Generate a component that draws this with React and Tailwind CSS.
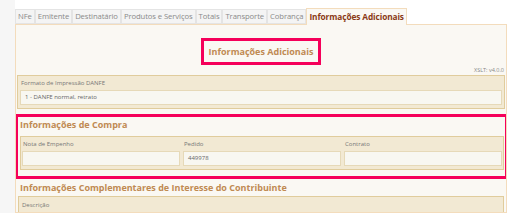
const tabs = ["NFe", "Emitente", "Destinatário", "Produtos e Serviços", "Totais", "Transporte", "Cobrança"];

function Field({ label, value }) {
    return (
        <div className="flex flex-col flex-1">
            <div className="h-[14px] flex items-center pl-[1px] text-[6px] text-[#777]">{label}</div>
            <div className="h-[15px] bg-[#f8f7f1] border border-[#e6d9b8] flex items-center pl-[4px] text-[6px] text-[#666]">
                {value}
            </div>
        </div>
    );
}

export default function App() {
    return (
        <div className="w-[514px] h-[223px] bg-white overflow-hidden font-['Open_Sans',sans-serif]">
            <div className="flex w-[514px] h-[213px] bg-white">
                <div className="w-[15px] h-full bg-[#f6f6f6]"></div>
                <div className="flex flex-col w-[492px] pt-[8px]">
                    {/* tabs */}
                    <div className="flex items-end h-[17px] relative z-10">
                        {tabs.map(t => (
                            <div key={t} className="h-[15px] px-[2px] mb-[1px] flex items-center border border-[#e4e4e4] bg-[#f4f4f4] text-[7.7px] text-[#8a8a8a] tracking-[-0.1px]">
                                {t}
                            </div>
                        ))}
                        <div className="h-[17px] px-[2px] flex items-center border border-b-0 border-[#f3dcbc] bg-[#faf8f3] text-[8.3px] font-bold text-[#8a3a16] tracking-[-0.1px]">
                            Informações Adicionais
                        </div>
                    </div>
                    {/* panel */}
                    <div className="flex-1 -mt-[1px] border border-[#f3dcbc] bg-[#faf8f3] px-[1px] overflow-hidden">
                        <div className="flex justify-center pt-[13px]">
                            <div className="w-[120px] h-[27px] border-[3px] border-[#f5005a] flex items-center justify-center text-[9px] font-bold text-[#c08a52]">
                                Informações Adicionais
                            </div>
                        </div>
                        <div className="h-[10px] flex items-center justify-end pr-[1px] text-[5.5px] text-[#888]">XSLT: v4.0.0</div>
                        <div className="border border-[#e0cc9c] bg-[#f2e9d3] px-[2px] pb-[3px]">
                            <Field label="Formato de Impressão DANFE" value="1 - DANFE normal, retrato" />
                        </div>
                        <div className="relative mt-[5px] pb-[9px]">
                            <div className="h-[22px] flex items-center pl-[3px] text-[9px] font-bold text-[#c08a52]">Informações de Compra</div>
                            <div className="ml-[3px] mr-[1px] border border-[#e0cc9c] bg-[#f2e9d3] px-[1px] pb-[3px] flex gap-[3px]">
                                <Field label="Nota de Empenho" value="" />
                                <Field label="Pedido" value="449978" />
                                <Field label="Contrato" value="" />
                            </div>
                            <div className="absolute -left-[2px] -right-[3px] top-0 bottom-0 border-[3px] border-[#f5005a]"></div>
                        </div>
                        <div className="h-[17px] flex items-center pl-[3px] text-[9px] font-bold text-[#c08a52]">Informações Complementares de Interesse do Contribuinte</div>
                        <div className="ml-[1px] mr-[1px] h-[30px] border border-[#e0cc9c] bg-[#f2e9d3] px-[2px]">
                            <div className="h-[16px] flex items-center pl-[1px] text-[6px] text-[#777]">Descrição</div>
                        </div>
                    </div>
                </div>
            </div>
        </div>
    );
}
